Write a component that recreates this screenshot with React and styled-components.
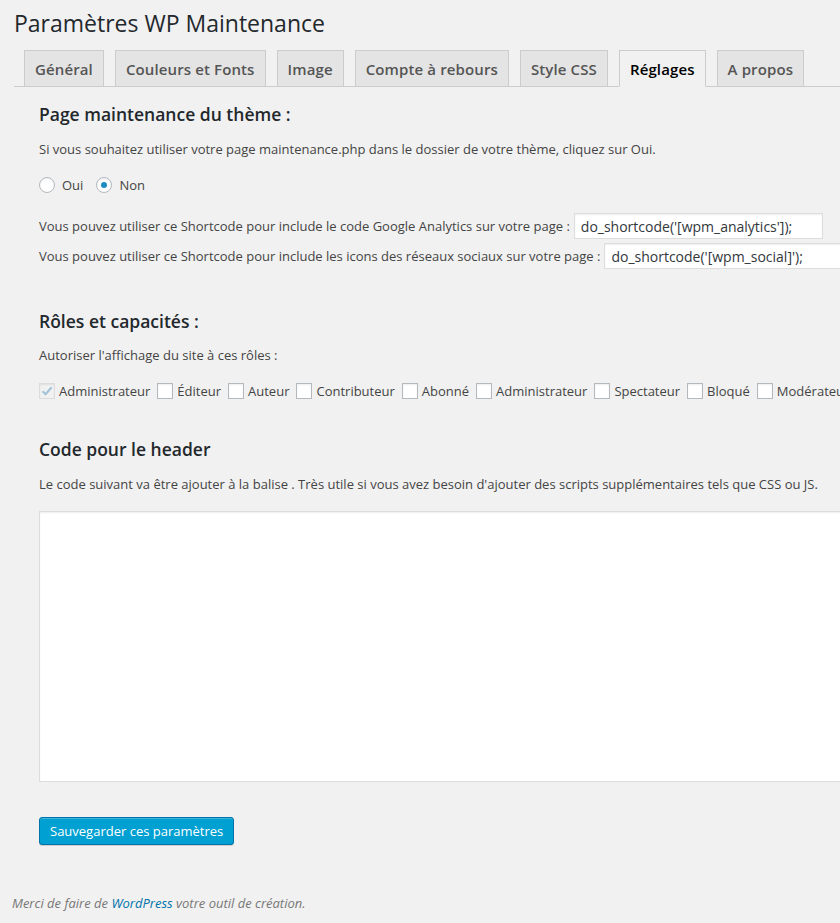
import React from "react";
import styled, { createGlobalStyle } from "styled-components";

const GlobalStyle = createGlobalStyle`
  html, body {
    margin: 0;
    padding: 0;
    background: #f1f1f1;
    overflow: hidden;
  }
  body {
    font-family: "Open Sans", "Liberation Sans", sans-serif;
    font-size: 13px;
    color: #444;
  }
`;

const Page = styled.div`
  width: 840px;
  min-height: 923px;
  display: flex;
  flex-direction: column;
`;

const Wrap = styled.div`
  margin-left: 14px;
  width: 1000px;
`;

const Title = styled.h1`
  margin: 0;
  padding-top: 9px;
  font-size: 23px;
  line-height: 29px;
  font-weight: 400;
  color: #23282d;
`;

const TabBar = styled.div`
  margin-top: 12px;
  display: flex;
  gap: 11px;
  padding-left: 10px;
  border-bottom: 1px solid #ccc;
`;

const Tab = styled.div`
  padding: 6px 10px 5px;
  font-size: 15px;
  line-height: 24px;
  font-weight: 600;
  letter-spacing: 0.12px;
  border: 1px solid #ccc;
  margin-bottom: -1px;
  background: ${(p) => (p.$active ? "#f1f1f1" : "#e4e4e4")};
  border-bottom-color: ${(p) => (p.$active ? "#f1f1f1" : "#ccc")};
  color: ${(p) => (p.$active ? "#000" : "#555")};
  white-space: nowrap;
`;

const Content = styled.div`
  padding-left: 25px;
  display: flex;
  flex-direction: column;
  align-items: flex-start;
`;

const Heading = styled.h3`
  margin: ${(p) => p.$top}px 0 0;
  font-size: 17.5px;
  line-height: 24px;
  font-weight: 600;
  color: #23282d;
`;

const Text = styled.p`
  margin: ${(p) => p.$top}px 0 0;
  line-height: 20px;
  white-space: nowrap;
`;

const OptionRow = styled.div`
  margin-top: 16px;
  display: flex;
  align-items: center;
  height: 20px;
  white-space: nowrap;
`;

const RadioCircle = styled.span`
  width: 16px;
  height: 16px;
  box-sizing: border-box;
  border-radius: 50%;
  border: 1px solid #b4b9be;
  background: #fff;
  box-shadow: inset 0 1px 2px rgba(0, 0, 0, 0.07);
  display: flex;
  align-items: center;
  justify-content: center;
  margin-right: 7px;

  &::after {
    content: "";
    width: 6px;
    height: 6px;
    border-radius: 50%;
    background: ${(p) => (p.$checked ? "#1e8cbe" : "transparent")};
  }
`;

const OptionLabel = styled.span`
  margin-right: ${(p) => p.$gap ?? 13}px;
`;

const CheckBox = styled.span`
  width: 16px;
  height: 16px;
  box-sizing: border-box;
  border: 1px solid ${(p) => (p.$disabled ? "#dcdcdc" : "#b4b9be")};
  background: ${(p) => (p.$disabled ? "#f1f1f1" : "#fff")};
  box-shadow: inset 0 1px 2px rgba(0, 0, 0, 0.07);
  display: flex;
  align-items: center;
  justify-content: center;
  margin-right: 4px;
`;

const ShortcodeRow = styled.div`
  margin-top: ${(p) => p.$top}px;
  display: flex;
  align-items: center;
  white-space: nowrap;
`;

const ShortcodeInput = styled.input`
  margin-left: 4px;
  width: ${(p) => p.$w}px;
  height: 26px;
  box-sizing: border-box;
  border: 1px solid #ddd;
  box-shadow: inset 0 1px 2px rgba(0, 0, 0, 0.07);
  background: #fff;
  padding: 0 6px;
  font-family: "Open Sans", "Liberation Sans", sans-serif;
  font-size: 14px;
  color: #32373c;
  outline: none;
`;

const CodeArea = styled.textarea`
  margin-top: 17px;
  width: 880px;
  height: 271px;
  box-sizing: border-box;
  border: 1px solid #ddd;
  box-shadow: inset 0 1px 2px rgba(0, 0, 0, 0.07);
  background: #fff;
  resize: none;
  outline: none;
`;

const SaveButton = styled.button`
  margin-top: 35px;
  height: 28px;
  padding: 0 10px 1px;
  background: #00a0d2;
  border: 1px solid #0073aa;
  border-radius: 3px;
  box-shadow: inset 0 1px 0 rgba(120, 200, 230, 0.5), 0 1px 0 rgba(0, 0, 0, 0.15);
  color: #fff;
  font-family: "Open Sans", "Liberation Sans", sans-serif;
  font-size: 13px;
  line-height: 26px;
  cursor: pointer;
`;

const Footer = styled.p`
  margin: 48px 0 0 12px;
  font-style: italic;
  line-height: 20px;
  color: #777;

  a {
    color: #0073aa;
    text-decoration: none;
  }
`;

const tabs = [
  "Général",
  "Couleurs et Fonts",
  "Image",
  "Compte à rebours",
  "Style CSS",
  "Réglages",
  "A propos",
];

const roles = [
  "Éditeur",
  "Auteur",
  "Contributeur",
  "Abonné",
  "Administrateur",
  "Spectateur",
  "Bloqué",
  "Modérateur",
];

const Check = () => (
  <svg width="14" height="14" viewBox="0 0 14 14">
    <path
      d="M2.5 7.2 L5.6 10.2 L11.6 3.2"
      fill="none"
      stroke="#a3c4d8"
      strokeWidth="2.2"
    />
  </svg>
);

const App = () => {
  return (
    <Page>
      <GlobalStyle />
      <Wrap>
        <Title>Paramètres WP Maintenance</Title>
        <TabBar>
          {tabs.map((t) => (
            <Tab key={t} $active={t === "Réglages"}>
              {t}
            </Tab>
          ))}
        </TabBar>

        <Content>
          <Heading $top={15}>Page maintenance du thème :</Heading>
          <Text $top={13}>
            Si vous souhaitez utiliser votre page maintenance.php dans le
            dossier de votre thème, cliquez sur Oui.
          </Text>
          <OptionRow>
            <RadioCircle />
            <OptionLabel>Oui</OptionLabel>
            <RadioCircle $checked />
            <OptionLabel>Non</OptionLabel>
          </OptionRow>

          <ShortcodeRow $top={18}>
            Vous pouvez utiliser ce Shortcode pour include le code Google
            Analytics sur votre page :
            <ShortcodeInput
              $w={249}
              readOnly
              value="do_shortcode('[wpm_analytics']);"
            />
          </ShortcodeRow>
          <ShortcodeRow $top={4}>
            Vous pouvez utiliser ce Shortcode pour include les icons des
            réseaux sociaux sur votre page :
            <ShortcodeInput
              $w={260}
              readOnly
              value="do_shortcode('[wpm_social]');"
            />
          </ShortcodeRow>

          <Heading $top={40}>Rôles et capacités :</Heading>
          <Text $top={12}>Autoriser l'affichage du site à ces rôles :</Text>
          <OptionRow>
            <CheckBox $disabled>
              <Check />
            </CheckBox>
            <OptionLabel $gap={7}>Administrateur</OptionLabel>
            {roles.map((r, i) => (
              <React.Fragment key={r + i}>
                <CheckBox />
                <OptionLabel $gap={7}>{r}</OptionLabel>
              </React.Fragment>
            ))}
          </OptionRow>

          <Heading $top={36}>Code pour le header</Heading>
          <Text $top={13}>
            Le code suivant va être ajouter à la balise . Très utile si vous
            avez besoin d'ajouter des scripts supplémentaires tels que CSS ou
            JS.
          </Text>
          <CodeArea />

          <SaveButton>Sauvegarder ces paramètres</SaveButton>
        </Content>
      </Wrap>
      <Footer>
        Merci de faire de <a href="#">WordPress</a> votre outil de création.
      </Footer>
    </Page>
  );
};

export default App;
